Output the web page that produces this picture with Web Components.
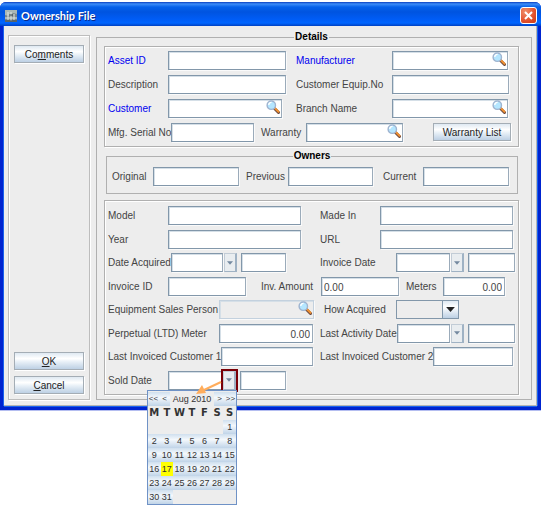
<!DOCTYPE html>
<html lang="en">
<head>
<meta charset="utf-8">
<title>Ownership File</title>
<style>
body { box-sizing: border-box; min-height: 100vh; margin: 0; padding-top: 2px; background: #fff; font: 10px/12px "Liberation Sans", Arial, sans-serif; color: #333; }
</style>
</head>
<body>
<ow-window heading="Ownership File">
  <ow-button slot="side">Co<u>m</u>ments</ow-button>
  <ow-button slot="actions"><u>O</u>K</ow-button>
  <ow-button slot="actions"><u>C</u>ancel</ow-button>

  <ow-group heading="Details" outer>
    <ow-group>
      <ow-row cols="178fr 222fr 7fr">
        <ow-field label="Asset ID" link lw="60"></ow-field>
        <ow-field label="Manufacturer" link kind="search" pad="10" lw="96"></ow-field>
      </ow-row>
      <ow-row cols="178fr 223fr 6fr">
        <ow-field label="Description" lw="60"></ow-field>
        <ow-field label="Customer Equip.No" pad="10" lw="96"></ow-field>
      </ow-row>
      <ow-row cols="174fr 226fr 7fr">
        <ow-field label="Customer" link kind="search" lw="60"></ow-field>
        <ow-field label="Branch Name" kind="search" pad="14" lw="96"></ow-field>
      </ow-row>
      <ow-row cols="146fr 149fr 30fr 78fr 4fr">
        <ow-field label="Mfg. Serial No" lw="60"></ow-field>
        <ow-field label="Warranty" kind="search" pad="7" lw="45"></ow-field>
        <span></span>
        <ow-button>Warranty List</ow-button>
      </ow-row>
    </ow-group>

    <ow-group heading="Owners" inset>
      <ow-row cols="127fr 134fr 136fr 3fr">
        <ow-field label="Original" lw="41"></ow-field>
        <ow-field label="Previous" pad="7" lw="42"></ow-field>
        <ow-field label="Current" pad="10" lw="40"></ow-field>
      </ow-row>
    </ow-group>

    <ow-group fill>
      <ow-row cols="193fr 212fr 2fr">
        <ow-field label="Model" lw="60"></ow-field>
        <ow-field label="Made In" pad="19" lw="60"></ow-field>
      </ow-row>
      <ow-row cols="193fr 212fr 2fr">
        <ow-field label="Year" lw="60"></ow-field>
        <ow-field label="URL" pad="19" lw="60"></ow-field>
      </ow-row>
      <ow-row cols="178fr 229fr">
        <ow-field label="Date Acquired" kind="date" lw="60"></ow-field>
        <ow-field label="Invoice Date" kind="date" pad="34" lw="76"></ow-field>
      </ow-row>
      <ow-row cols="138fr 153fr 106fr 10fr">
        <ow-field label="Invoice ID" lw="60"></ow-field>
        <ow-field label="Inv. Amount" value="0.00" pad="15" lw="60"></ow-field>
        <ow-field label="Meters" value="0.00" numeric pad="7" lw="37"></ow-field>
      </ow-row>
      <ow-row cols="206fr 145fr 56fr">
        <ow-field label="Equipment Sales Person" kind="search" off lw="111"></ow-field>
        <ow-field label="How Acquired" kind="select" pad="10" lw="72"></ow-field>
      </ow-row>
      <ow-row cols="205fr 202fr">
        <ow-field label="Perpetual (LTD) Meter" value="0.00" numeric lw="111"></ow-field>
        <ow-field label="Last Activity Date" kind="date" pad="7" lw="76"></ow-field>
      </ow-row>
      <ow-row cols="205fr 200fr 2fr">
        <ow-field label="Last Invoiced Customer 1" lw="111"></ow-field>
        <ow-field label="Last Invoiced Customer 2" pad="7" lw="111"></ow-field>
      </ow-row>
      <ow-row cols="178fr 229fr">
        <ow-field label="Sold Date" kind="date" marked lw="60">
          <ow-calendar slot="popup"></ow-calendar>
        </ow-field>
      </ow-row>
    </ow-group>
  </ow-group>
</ow-window>

<script>
const BASE = `*{box-sizing:border-box} input,button,select{font:inherit;margin:0;min-width:0}`;

class OwWindow extends HTMLElement {
  connectedCallback() {
    this.attachShadow({ mode: 'open' }).innerHTML = `<style>${BASE}
      :host{display:flex;flex-direction:column;box-sizing:border-box;min-height:408px;border-radius:6px 6px 0 0;
        background:#0024d0;box-shadow:0 1px 0 #b4bdf0}
      header{display:flex;align-items:center;gap:4px;height:24px;padding:3px 4px 0 5px;border-radius:6px 6px 0 0;
        background:linear-gradient(#0a3fc0 0,#3d8df8 2px,#0661ea 5px,#0054e0 10px,#005cf5 17px,#0066ff 21px,#0041c2 24px)}
      h1{flex:1;margin:0;color:#fff;font:bold 11px/16px Lato,"Open Sans",sans-serif;text-shadow:1px 1px 0 #0a2a88}
      .logo{width:12px;height:12px}
      .close{width:17px;height:17px;padding:0;border:1px solid #fff;border-radius:3px;display:grid;place-items:center;
        background:radial-gradient(circle at 30% 25%,#f0906c,#e2502c 60%,#c83a14)}
      .close svg{width:11px;height:11px}
      main{flex:1;display:flex;gap:6px;margin:0 4px 4px;padding:5px 4px 5px 4px;background:#ededed;
        border-right:1px solid #b4b4b4;border-bottom:1px solid #b4b4b4;
        box-shadow:-1px 0 #1a62ee,1px 0 #1a62ee,0 1px #1a62ee}
      nav{flex:0 0 82px;margin-top:4px;padding:9px 5px 5px;display:flex;flex-direction:column;gap:6px;
        border:1px solid #bdbdbd;box-shadow:1px 1px #fff,inset 1px 1px #fff}
      .gap{flex:1}
      section{flex:1;min-width:0;display:flex}
      ::slotted(ow-group){flex:1}
    </style>
    <header>
      <svg class="logo" viewBox="0 0 12 12"><path d="M0 0h12v12H0z" fill="#7b868a"/><path d="M0 0h12v4L8 3 5 6 0 5z" fill="#a9b7b5"/><path d="M0 8h12M3 2v8M6 2v9M9 4v6" stroke="#dfe7e5" stroke-width="1"/><path d="M0 11h12M4 5h4" stroke="#36444c"/></svg>
      <h1>${this.getAttribute('heading')}</h1>
      <button class="close" aria-label="Close"><svg viewBox="0 0 11 11"><path d="M2 2l7 7M9 2l-7 7" stroke="#fff" stroke-width="2"/></svg></button>
    </header>
    <main><nav><slot name="side"></slot><span class="gap"></span><slot name="actions"></slot></nav><section><slot></slot></section></main>`;
  }
}

class OwGroup extends HTMLElement {
  connectedCallback() {
    const h = this.getAttribute('heading');
    this.attachShadow({ mode: 'open' }).innerHTML = `<style>${BASE}
      :host{display:flex;min-width:0}
      :host([inset]){margin:3px 1px 6px 2px}
      :host([fill]){flex:1}
      fieldset{flex:1;min-width:0;margin:0;padding:4px 3px;border:1px solid #b0b0b0;box-shadow:1px 1px #fff,inset 1px 1px #fff}
      .body{display:flex;flex-direction:column;gap:5px}
      legend{margin:0 auto;padding:0 1px;color:#000;font-weight:bold;line-height:12px}
      :host([heading]) fieldset{box-shadow:none}
      :host([outer]) fieldset{padding:3px 12px 4px 7px;display:flex;flex-direction:column}
      :host([outer]) .body{flex:1;gap:0}
      :host([inset]) fieldset{padding:5px 5px 7px}
      :host([fill]) fieldset{display:flex;padding:5px 3px 4px}
      :host([fill]) .body{flex:1;min-width:0;gap:0;justify-content:space-between}
    </style><fieldset>${h ? `<legend>${h}</legend>` : ''}<div class="body"><slot></slot></div></fieldset>`;
  }
}

class OwRow extends HTMLElement {
  connectedCallback() {
    this.attachShadow({ mode: 'open' }).innerHTML = `<style>
      :host{display:grid;grid-template-columns:${this.getAttribute('cols')};min-height:19px}
      ::slotted(*){min-width:0}
    </style><slot></slot>`;
  }
}

class OwButton extends HTMLElement {
  connectedCallback() {
    this.attachShadow({ mode: 'open' }).innerHTML = `<style>${BASE}
      :host{display:block}
      button{display:block;width:100%;height:18px;padding:2px 0 0;color:#222;white-space:nowrap;border:1px solid #a4adb5;
        background:linear-gradient(#dfe9f2,#fff 35%,#e8f0f7 55%,#bdd0e4);box-shadow:1px 1px #fff}
    </style><button type="button"><slot></slot></button>`;
  }
}

const LENS = `<svg viewBox="0 0 14 14"><path d="M8.500 8.500l4 4" stroke="#6b4a40" stroke-width="3" stroke-linecap="round"/><path d="M9 8.300l3.500 3.500" stroke="#f09030" stroke-width="2" stroke-linecap="round"/><circle cx="5.300" cy="5.200" r="4.200" fill="#b4e6ff" stroke="#9fb4d0" stroke-width="1.400"/><path d="M2.800 5a2.600 2.600 0 0 1 2.800-2.600" stroke="#fff" stroke-width="1.400" fill="none"/></svg>`;
const ARROW = `<svg class="tri" viewBox="0 0 7 4"><path d="M0 0h7L3.500 4z" fill="currentColor"/></svg>`;

class OwField extends HTMLElement {
  connectedCallback() {
    const a = n => this.getAttribute(n) || '';
    const kind = a('kind'), off = this.hasAttribute('off') ? 'disabled' : '';
    let control;
    if (kind === 'search')
      control = `<div class="box"><input id="c" ${off}><button type="button" class="lens" aria-label="Search ${a('label')}">${LENS}</button></div>`;
    else if (kind === 'date')
      control = `<input class="box day" id="c"><button type="button" class="drop" aria-label="Choose ${a('label')}">${ARROW}</button><input class="box time" aria-label="${a('label')} time">`;
    else if (kind === 'select')
      control = `<div class="pick"><select id="c"><option></option></select><span>${ARROW}</span></div>`;
    else control = `<input class="box" id="c" value="${a('value')}">`;
    const pointer = this.hasAttribute('marked')
      ? `<svg class="pointer" viewBox="0 0 26 14"><path d="M25 1L8 9" stroke="#ffad5c" stroke-width="2"/><path d="M0 13L6 4l4 8z" fill="#ffad5c"/></svg>` : '';
    this.attachShadow({ mode: 'open' }).innerHTML = `<style>${BASE}
      :host{display:flex;position:relative;padding-left:${a('pad') || 0}px;height:19px;box-sizing:border-box}
      label{flex:0 0 ${a('lw')}px;line-height:20px;white-space:nowrap;color:#444}
      :host([link]) label{color:#0000f0}
      .box{flex:1 1 0;width:0;height:19px;background:#fff;border:1px solid #8297aa;border-right-color:#9babba;
        box-shadow:inset 1px 1px #d5dfe7,1px 1px #fafafa;border-radius:0;padding:2px 2px 0;color:#444;outline:0}
      :host([numeric]) input{text-align:right}
      div.box{display:flex;padding:0}
      div.box input{flex:1;width:0;border:0;background:none}
      :host([off]) .box{background:#ededed;border-color:#c3d1de}
      .lens{flex:0 0 15px;align-self:flex-start;border:0;padding:0;background:none}
      .lens svg{display:block;width:14px;height:14px}
      .day{flex-grow:54}.time{flex-grow:46}
      .drop{flex:0 0 13px;margin:0 4px 0 1px;padding:0;border:1px solid #c2ccd6;border-right:2px solid #9fb2c4;
        border-bottom:1px solid #9fb2c4;background:#e9edf0;color:#7489a0;display:grid;place-items:center}
      .tri{display:block;width:6px;height:4px}
      .pick{flex:1;display:grid;grid-template-columns:1fr 16px;border:1px solid #8297aa;background:#ededed}
      select{grid-area:1/1/2/3;appearance:none;width:100%;border:0;background:none}
      .pick span{grid-area:1/2;pointer-events:none;display:grid;place-items:center;color:#222;border-left:1px solid #8297aa;
        background:linear-gradient(#dfe9f2,#fff 35%,#bdd0e4)}
      .pick .tri{width:9px;height:5px}
      :host([marked]) .drop{outline:2px solid #7a0007;outline-offset:0}
      .pointer{position:absolute;left:88px;top:10px;width:26px;height:14px;z-index:3}
      ::slotted([slot=popup]){position:absolute;left:39px;top:100%;z-index:2}
    </style><label for="c">${a('label')}</label>${control}<slot name="popup"></slot>${pointer}`;
  }
}

class OwCalendar extends HTMLElement {
  connectedCallback() {
    let rows = '';
    for (let first = -5; first <= 31; first += 7) {
      rows += '<tr>';
      for (let d = first; d < first + 7; d++)
        rows += d < 1 || d > 31 ? '<td></td>' : `<td><button type="button"${d === 17 ? ' class="today"' : ''}>${d}</button></td>`;
      rows += '</tr>';
    }
    this.attachShadow({ mode: 'open' }).innerHTML = `<style>${BASE}
      :host{display:block;box-sizing:border-box;width:90px;border:1px solid #6f92c6;padding-top:1px;background:#ededed;color:#333}
      header{display:flex;height:14px;font-size:9px;line-height:14px;background:#ededed}
      header span{flex:1;text-align:center;white-space:nowrap}
      button{border:0;padding:0;color:inherit;background:linear-gradient(#cfdfee,#f4f8fc 40%,#c0d4e8)}
      header button{width:11px;font-size:8px}
      table{width:100%;table-layout:fixed;border-collapse:collapse;text-align:center}
      th,td{height:14px;padding:0}
      th{font:bold 10px/14px "DejaVu Sans",sans-serif}
      td button{display:block;width:100%;height:14px;font-size:9px;line-height:14px}
      td .today{background:#ff0}
    </style>
    <header><button type="button" aria-label="Previous year">&lt;&lt;</button><button type="button" aria-label="Previous month">&lt;</button><span>Aug 2010</span><button type="button" aria-label="Next month">&gt;</button><button type="button" aria-label="Next year">&gt;&gt;</button></header>
    <table><thead><tr>${[...'MTWTFSS'].map(d => `<th>${d}</th>`).join('')}</tr></thead><tbody>${rows}</tbody></table>`;
  }
}

customElements.define('ow-window', OwWindow);
customElements.define('ow-group', OwGroup);
customElements.define('ow-row', OwRow);
customElements.define('ow-button', OwButton);
customElements.define('ow-field', OwField);
customElements.define('ow-calendar', OwCalendar);
</script>
</body>
</html>
